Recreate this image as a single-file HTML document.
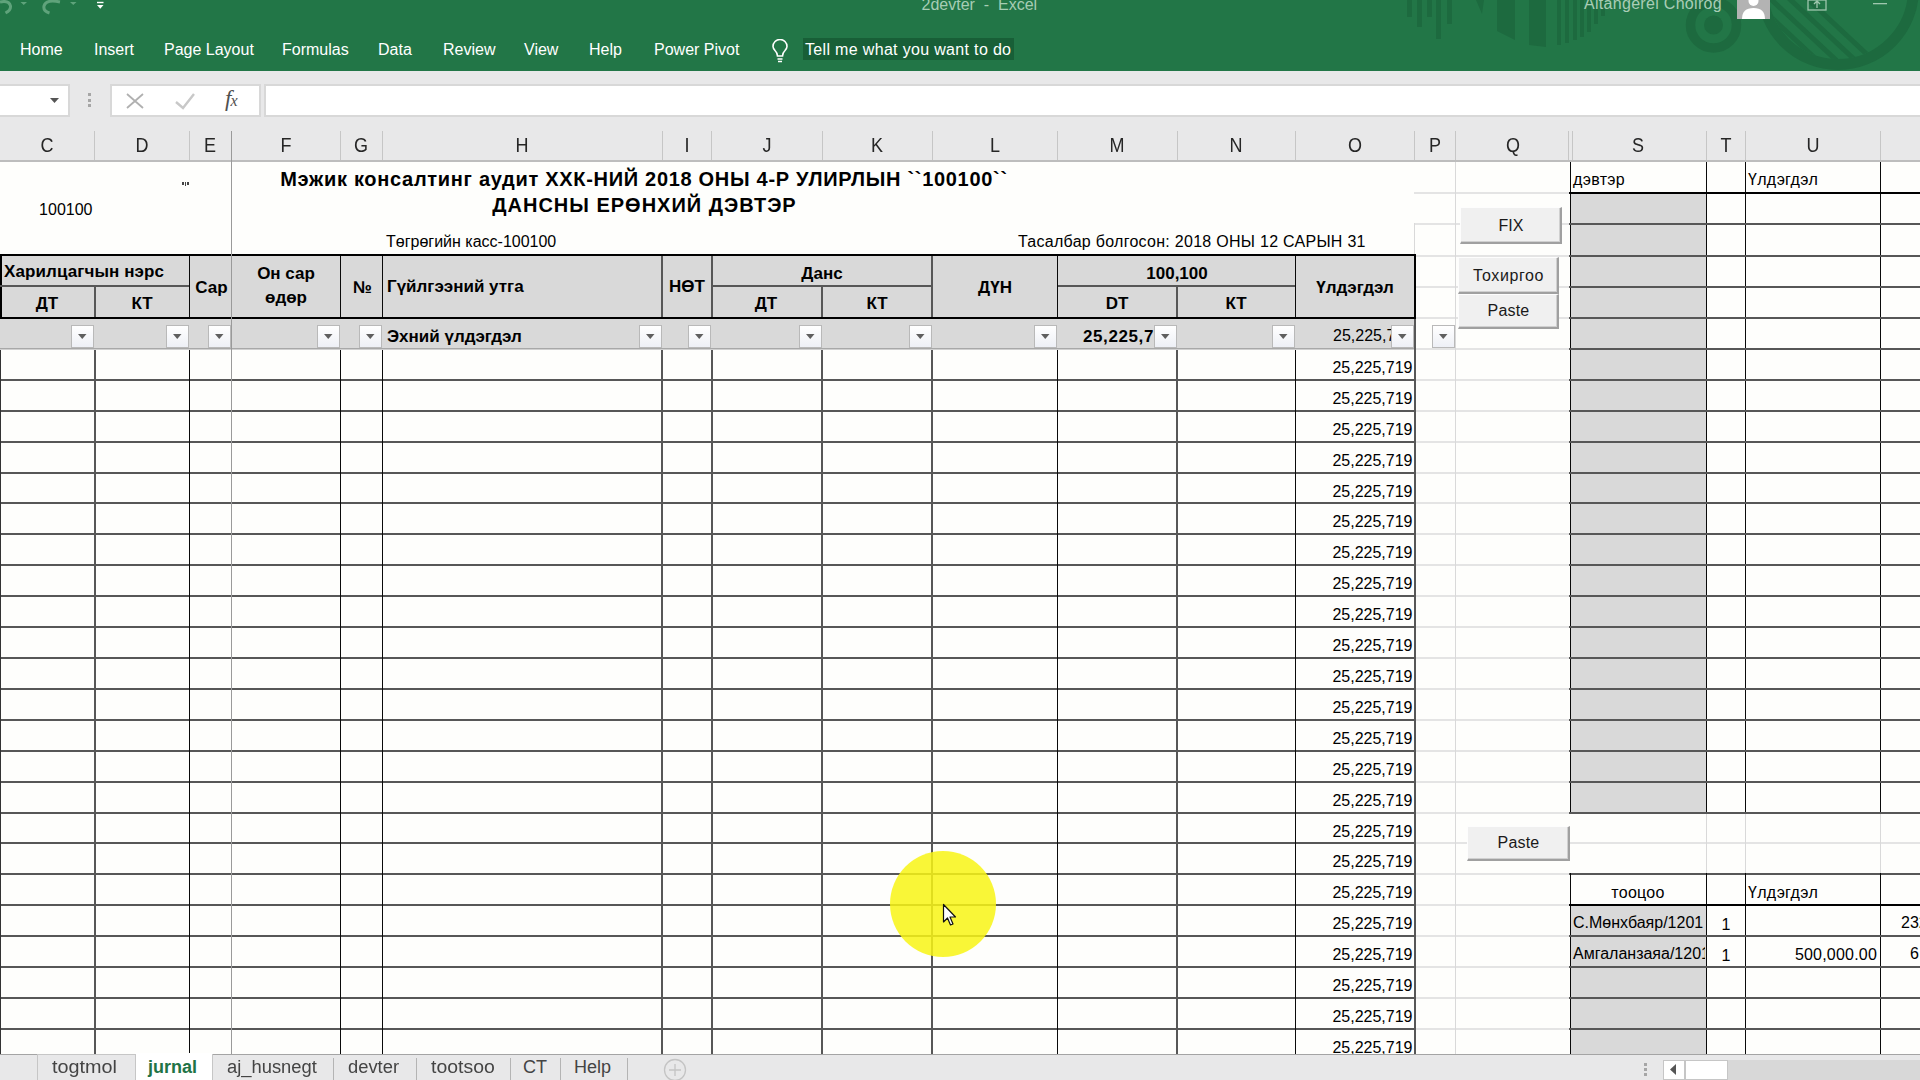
<!DOCTYPE html><html><head><meta charset="utf-8"><style>
html,body{margin:0;padding:0;}body{width:1920px;height:1080px;overflow:hidden;position:relative;background:#fff;font-family:"Liberation Sans",sans-serif;}
div{position:absolute;box-sizing:border-box;}.t{white-space:nowrap;overflow:visible;}
</style></head><body>
<div style="left:0px;top:0px;width:1920px;height:71px;background:#227647"></div>
<div style="left:1407px;top:0px;width:5px;height:17px;background:#1d6a3f"></div>
<div style="left:1417px;top:0px;width:5px;height:27px;background:#1d6a3f"></div>
<div style="left:1427px;top:0px;width:5px;height:17px;background:#1d6a3f"></div>
<div style="left:1436px;top:0px;width:5px;height:39px;background:#1d6a3f"></div>
<div style="left:1447px;top:0px;width:5px;height:24px;background:#1d6a3f"></div>
<div style="left:1557px;top:0px;width:4px;height:45px;background:#1d6a3f"></div>
<div style="left:1565px;top:0px;width:4px;height:43px;background:#1d6a3f"></div>
<div style="left:1573px;top:0px;width:4px;height:40px;background:#1d6a3f"></div>
<div style="left:1580px;top:0px;width:4px;height:37px;background:#1d6a3f"></div>
<div style="left:1587px;top:0px;width:4px;height:32px;background:#1d6a3f"></div>
<div style="left:1594px;top:0px;width:4px;height:24px;background:#1d6a3f"></div>
<div style="left:1601px;top:0px;width:4px;height:16px;background:#1d6a3f"></div>
<svg style="position:absolute;left:0;top:0" width="1920" height="71"><g fill="#1d6a3f"><polygon points="1476,0 1484,0 1482,14"/><polygon points="1497,0 1515,0 1515,40 1497,31"/><polygon points="1529,0 1546,0 1546,47 1529,45"/></g><defs><clipPath id="ci"><circle cx="1838" cy="-11" r="70"/></clipPath></defs><g fill="none" stroke="#1d6a3f"><circle cx="1713.5" cy="25" r="23" stroke-width="9.5"/><circle cx="1713.5" cy="25" r="9.5" fill="#1d6a3f" stroke="none"/><circle cx="1838" cy="-11" r="75.5" stroke-width="11"/><path clip-path="url(#ci)" d="M1742 -10 L1832 74 M1761 -10 L1851 74 M1780 -10 L1870 74 M1798 -10 L1888 74" stroke-width="5"/></g></svg>
<svg style="position:absolute;left:0;top:0" width="120" height="16"><g fill="none" stroke="#5fa37b" stroke-width="3"><path d="M0 2 Q9 0 10.5 6 Q11 10 5.5 13"/><path d="M60 2 Q46 -1 44 6 Q43 11 49.5 13"/></g><g fill="#5fa37b"><polygon points="20.5,2 27,2 23.75,5"/><polygon points="70,2 76.5,2 73.25,5"/></g><g fill="#ffffff"><rect x="97" y="1.8" width="6.5" height="1.4"/><polygon points="97,5 103.5,5 100.25,8.7"/></g></svg>
<div class="t" style="left:921.50px;top:-3.24px;width:1000px;font-size:16px;line-height:16px;color:#a6cdb4;text-align:left;">2devter&nbsp; - &nbsp;Excel</div>
<div class="t" style="left:1584.00px;top:-3.54px;width:1000px;font-size:16px;line-height:16px;color:#a9cdb6;text-align:left;letter-spacing:0.3px;">Altangerel Choirog</div>
<div style="left:1737px;top:0px;width:33px;height:19px;background:#b3b3b3"></div>
<svg style="position:absolute;left:1737px;top:0" width="33" height="19"><g fill="#fff"><circle cx="16.5" cy="1" r="5"/><path d="M5 19 Q5 8 16.5 8 Q28 8 28 19 Z"/></g></svg>
<svg style="position:absolute;left:1800px;top:0" width="100" height="14"><g fill="none" stroke="#9fc7ae" stroke-width="1.3"><rect x="8" y="0" width="18" height="10"/><path d="M17 8 V1 M14 4 L17 1 L20 4"/></g><rect x="73" y="3" width="14" height="1.3" fill="#9fc7ae"/></svg>
<div class="t" style="left:20.00px;top:41.96px;width:1000px;font-size:16px;line-height:16px;color:#ffffff;text-align:left;">Home</div>
<div class="t" style="left:94.00px;top:41.96px;width:1000px;font-size:16px;line-height:16px;color:#ffffff;text-align:left;">Insert</div>
<div class="t" style="left:164.00px;top:41.96px;width:1000px;font-size:16px;line-height:16px;color:#ffffff;text-align:left;">Page Layout</div>
<div class="t" style="left:282.00px;top:41.96px;width:1000px;font-size:16px;line-height:16px;color:#ffffff;text-align:left;">Formulas</div>
<div class="t" style="left:378.00px;top:41.96px;width:1000px;font-size:16px;line-height:16px;color:#ffffff;text-align:left;">Data</div>
<div class="t" style="left:443.00px;top:41.96px;width:1000px;font-size:16px;line-height:16px;color:#ffffff;text-align:left;">Review</div>
<div class="t" style="left:524.00px;top:41.96px;width:1000px;font-size:16px;line-height:16px;color:#ffffff;text-align:left;">View</div>
<div class="t" style="left:589.00px;top:41.96px;width:1000px;font-size:16px;line-height:16px;color:#ffffff;text-align:left;">Help</div>
<div class="t" style="left:654.00px;top:41.96px;width:1000px;font-size:16px;line-height:16px;color:#ffffff;text-align:left;">Power Pivot</div>
<svg style="position:absolute;left:770px;top:38.5px" width="22" height="26"><g fill="none" stroke="#fff" stroke-width="1.6"><path d="M7.5 17 Q7.5 14 5 11.5 Q3 9 3 7.5 A7 7 0 0 1 17 7.5 Q17 9 15 11.5 Q12.5 14 12.5 17 Z"/><path d="M7.5 20 H12.5 M8 22.5 H12"/></g></svg>
<div style="left:803px;top:38px;width:211px;height:22px;background:#185f37"></div>
<div class="t" style="left:805.00px;top:41.96px;width:1000px;font-size:16px;line-height:16px;color:#ffffff;text-align:left;letter-spacing:0.33px;">Tell me what you want to do</div>
<div style="left:0px;top:71px;width:1920px;height:90px;background:#e8e8e9"></div>
<div style="left:0px;top:84px;width:70px;height:33px;background:#fff;border:2px solid #d8d8d8;border-left:none"></div>
<svg style="position:absolute;left:50px;top:98px" width="10" height="6"><polygon points="0,0 9,0 4.5,5" fill="#555"/></svg>
<div style="left:88px;top:93px;width:3px;height:3px;background:#a6a6a6"></div>
<div style="left:88px;top:99px;width:3px;height:3px;background:#a6a6a6"></div>
<div style="left:88px;top:104px;width:3px;height:3px;background:#a6a6a6"></div>
<div style="left:110px;top:84px;width:151px;height:33px;background:#fff;border:2px solid #d8d8d8"></div>
<svg style="position:absolute;left:110px;top:85px" width="150" height="32"><g fill="none" stroke-width="1.8"><path d="M17 9 L33 23 M33 9 L17 23" stroke="#b0b0b0"/><path d="M66 17 L73 23 L84 9" stroke="#c8c8c8" stroke-width="2.4"/></g></svg>
<div class="t" style="left:225.00px;top:86.53px;width:1000px;font-size:23px;line-height:23px;color:#505050;text-align:left;font-family:'Liberation Serif',serif;"><i>f</i><i style='font-size:16px;margin-left:-1px'>x</i></div>
<div style="left:264px;top:84px;width:1656px;height:33px;background:#fff;border:2px solid #d8d8d8;border-right:none"></div>
<div class="t" style="left:-453.00px;top:135.37px;width:1000px;font-size:20px;line-height:20px;color:#262626;text-align:center;transform:scaleX(0.9);transform-origin:center center;">C</div>
<div class="t" style="left:-358.50px;top:135.37px;width:1000px;font-size:20px;line-height:20px;color:#262626;text-align:center;transform:scaleX(0.9);transform-origin:center center;">D</div>
<div class="t" style="left:-290.00px;top:135.37px;width:1000px;font-size:20px;line-height:20px;color:#262626;text-align:center;transform:scaleX(0.9);transform-origin:center center;">E</div>
<div class="t" style="left:-214.50px;top:135.37px;width:1000px;font-size:20px;line-height:20px;color:#262626;text-align:center;transform:scaleX(0.9);transform-origin:center center;">F</div>
<div class="t" style="left:-139.00px;top:135.37px;width:1000px;font-size:20px;line-height:20px;color:#262626;text-align:center;transform:scaleX(0.9);transform-origin:center center;">G</div>
<div class="t" style="left:22.00px;top:135.37px;width:1000px;font-size:20px;line-height:20px;color:#262626;text-align:center;transform:scaleX(0.9);transform-origin:center center;">H</div>
<div class="t" style="left:186.50px;top:135.37px;width:1000px;font-size:20px;line-height:20px;color:#262626;text-align:center;transform:scaleX(0.9);transform-origin:center center;">I</div>
<div class="t" style="left:266.50px;top:135.37px;width:1000px;font-size:20px;line-height:20px;color:#262626;text-align:center;transform:scaleX(0.9);transform-origin:center center;">J</div>
<div class="t" style="left:377.00px;top:135.37px;width:1000px;font-size:20px;line-height:20px;color:#262626;text-align:center;transform:scaleX(0.9);transform-origin:center center;">K</div>
<div class="t" style="left:494.50px;top:135.37px;width:1000px;font-size:20px;line-height:20px;color:#262626;text-align:center;transform:scaleX(0.9);transform-origin:center center;">L</div>
<div class="t" style="left:617.00px;top:135.37px;width:1000px;font-size:20px;line-height:20px;color:#262626;text-align:center;transform:scaleX(0.9);transform-origin:center center;">M</div>
<div class="t" style="left:736.00px;top:135.37px;width:1000px;font-size:20px;line-height:20px;color:#262626;text-align:center;transform:scaleX(0.9);transform-origin:center center;">N</div>
<div class="t" style="left:854.50px;top:135.37px;width:1000px;font-size:20px;line-height:20px;color:#262626;text-align:center;transform:scaleX(0.9);transform-origin:center center;">O</div>
<div class="t" style="left:934.50px;top:135.37px;width:1000px;font-size:20px;line-height:20px;color:#262626;text-align:center;transform:scaleX(0.9);transform-origin:center center;">P</div>
<div class="t" style="left:1012.50px;top:135.37px;width:1000px;font-size:20px;line-height:20px;color:#262626;text-align:center;transform:scaleX(0.9);transform-origin:center center;">Q</div>
<div class="t" style="left:1138.00px;top:135.37px;width:1000px;font-size:20px;line-height:20px;color:#262626;text-align:center;transform:scaleX(0.9);transform-origin:center center;">S</div>
<div class="t" style="left:1225.50px;top:135.37px;width:1000px;font-size:20px;line-height:20px;color:#262626;text-align:center;transform:scaleX(0.9);transform-origin:center center;">T</div>
<div class="t" style="left:1312.50px;top:135.37px;width:1000px;font-size:20px;line-height:20px;color:#262626;text-align:center;transform:scaleX(0.9);transform-origin:center center;">U</div>
<div style="left:94px;top:131px;width:1px;height:30px;background:#c6c6c6"></div>
<div style="left:189px;top:131px;width:1px;height:30px;background:#c6c6c6"></div>
<div style="left:340px;top:131px;width:1px;height:30px;background:#c6c6c6"></div>
<div style="left:382px;top:131px;width:1px;height:30px;background:#c6c6c6"></div>
<div style="left:662px;top:131px;width:1px;height:30px;background:#c6c6c6"></div>
<div style="left:711px;top:131px;width:1px;height:30px;background:#c6c6c6"></div>
<div style="left:822px;top:131px;width:1px;height:30px;background:#c6c6c6"></div>
<div style="left:932px;top:131px;width:1px;height:30px;background:#c6c6c6"></div>
<div style="left:1057px;top:131px;width:1px;height:30px;background:#c6c6c6"></div>
<div style="left:1177px;top:131px;width:1px;height:30px;background:#c6c6c6"></div>
<div style="left:1295px;top:131px;width:1px;height:30px;background:#c6c6c6"></div>
<div style="left:1414px;top:131px;width:1px;height:30px;background:#c6c6c6"></div>
<div style="left:1455px;top:131px;width:1px;height:30px;background:#c6c6c6"></div>
<div style="left:1568px;top:131px;width:1px;height:30px;background:#c6c6c6"></div>
<div style="left:1572px;top:131px;width:1px;height:30px;background:#c6c6c6"></div>
<div style="left:1706px;top:131px;width:1px;height:30px;background:#c6c6c6"></div>
<div style="left:1745px;top:131px;width:1px;height:30px;background:#c6c6c6"></div>
<div style="left:1880px;top:131px;width:1px;height:30px;background:#c6c6c6"></div>
<div style="left:0px;top:160px;width:1920px;height:2px;background:#bdbdbd"></div>
<div style="left:0px;top:162px;width:1920px;height:892px;background:#fefefc"></div>
<div style="left:1414px;top:192px;width:156px;height:2px;background:#e4e4e4"></div>
<div style="left:1414px;top:223px;width:156px;height:2px;background:#e4e4e4"></div>
<div style="left:1414px;top:255px;width:156px;height:2px;background:#e4e4e4"></div>
<div style="left:1414px;top:286px;width:156px;height:2px;background:#e4e4e4"></div>
<div style="left:1414px;top:317px;width:156px;height:2px;background:#e4e4e4"></div>
<div style="left:1414px;top:348px;width:156px;height:2px;background:#e4e4e4"></div>
<div style="left:1414px;top:379px;width:156px;height:2px;background:#e4e4e4"></div>
<div style="left:1414px;top:410px;width:156px;height:2px;background:#e4e4e4"></div>
<div style="left:1414px;top:441px;width:156px;height:2px;background:#e4e4e4"></div>
<div style="left:1414px;top:472px;width:156px;height:2px;background:#e4e4e4"></div>
<div style="left:1414px;top:502px;width:156px;height:2px;background:#e4e4e4"></div>
<div style="left:1414px;top:533px;width:156px;height:2px;background:#e4e4e4"></div>
<div style="left:1414px;top:564px;width:156px;height:2px;background:#e4e4e4"></div>
<div style="left:1414px;top:595px;width:156px;height:2px;background:#e4e4e4"></div>
<div style="left:1414px;top:626px;width:156px;height:2px;background:#e4e4e4"></div>
<div style="left:1414px;top:657px;width:156px;height:2px;background:#e4e4e4"></div>
<div style="left:1414px;top:688px;width:156px;height:2px;background:#e4e4e4"></div>
<div style="left:1414px;top:719px;width:156px;height:2px;background:#e4e4e4"></div>
<div style="left:1414px;top:750px;width:156px;height:2px;background:#e4e4e4"></div>
<div style="left:1414px;top:781px;width:156px;height:2px;background:#e4e4e4"></div>
<div style="left:1414px;top:812px;width:156px;height:2px;background:#e4e4e4"></div>
<div style="left:1414px;top:842px;width:156px;height:2px;background:#e4e4e4"></div>
<div style="left:1414px;top:873px;width:156px;height:2px;background:#e4e4e4"></div>
<div style="left:1414px;top:904px;width:156px;height:2px;background:#e4e4e4"></div>
<div style="left:1414px;top:935px;width:156px;height:2px;background:#e4e4e4"></div>
<div style="left:1414px;top:966px;width:156px;height:2px;background:#e4e4e4"></div>
<div style="left:1414px;top:997px;width:156px;height:2px;background:#e4e4e4"></div>
<div style="left:1414px;top:1028px;width:156px;height:2px;background:#e4e4e4"></div>
<div style="left:1455px;top:162px;width:1px;height:892px;background:#d9d9d9"></div>
<div style="left:1414px;top:223px;width:1px;height:32px;background:#d9d9d9"></div>
<div style="left:1570px;top:842px;width:350px;height:2px;background:#e4e4e4"></div>
<div style="left:1706px;top:812px;width:1px;height:62px;background:#d9d9d9"></div>
<div style="left:1745px;top:812px;width:1px;height:62px;background:#d9d9d9"></div>
<div style="left:1880px;top:812px;width:1px;height:62px;background:#d9d9d9"></div>
<div style="left:0px;top:255px;width:1415px;height:94px;background:#d9d9d9"></div>
<div style="left:0px;top:254px;width:1416px;height:2px;background:#000"></div>
<div style="left:0px;top:317px;width:1416px;height:2px;background:#000"></div>
<div style="left:0px;top:254px;width:2px;height:65px;background:#000"></div>
<div style="left:1414px;top:254px;width:2px;height:65px;background:#000"></div>
<div style="left:0px;top:285px;width:189px;height:2px;background:#575757"></div>
<div style="left:711px;top:285px;width:221px;height:2px;background:#575757"></div>
<div style="left:1057px;top:285px;width:238px;height:2px;background:#575757"></div>
<div style="left:189px;top:256px;width:1px;height:61px;background:#0a0a0a"></div>
<div style="left:340px;top:256px;width:1px;height:61px;background:#0a0a0a"></div>
<div style="left:382px;top:256px;width:1px;height:61px;background:#0a0a0a"></div>
<div style="left:661px;top:256px;width:2px;height:61px;background:#575757"></div>
<div style="left:711px;top:256px;width:2px;height:61px;background:#575757"></div>
<div style="left:931px;top:256px;width:2px;height:61px;background:#575757"></div>
<div style="left:1057px;top:256px;width:1px;height:61px;background:#0a0a0a"></div>
<div style="left:1295px;top:256px;width:1px;height:61px;background:#0a0a0a"></div>
<div style="left:94px;top:287px;width:2px;height:30px;background:#575757"></div>
<div style="left:821px;top:287px;width:2px;height:30px;background:#575757"></div>
<div style="left:1176px;top:287px;width:2px;height:30px;background:#575757"></div>
<div style="left:0px;top:348px;width:1416px;height:1px;background:#a8a8a8"></div>
<div style="left:0px;top:349px;width:1416px;height:1px;background:#d0d0d0"></div>
<div style="left:0px;top:379px;width:1416px;height:2px;background:#575757"></div>
<div style="left:0px;top:410px;width:1416px;height:2px;background:#575757"></div>
<div style="left:0px;top:441px;width:1416px;height:2px;background:#575757"></div>
<div style="left:0px;top:472px;width:1416px;height:2px;background:#575757"></div>
<div style="left:0px;top:502px;width:1416px;height:2px;background:#575757"></div>
<div style="left:0px;top:533px;width:1416px;height:2px;background:#575757"></div>
<div style="left:0px;top:564px;width:1416px;height:2px;background:#575757"></div>
<div style="left:0px;top:595px;width:1416px;height:2px;background:#575757"></div>
<div style="left:0px;top:626px;width:1416px;height:2px;background:#575757"></div>
<div style="left:0px;top:657px;width:1416px;height:2px;background:#575757"></div>
<div style="left:0px;top:688px;width:1416px;height:2px;background:#575757"></div>
<div style="left:0px;top:719px;width:1416px;height:2px;background:#575757"></div>
<div style="left:0px;top:750px;width:1416px;height:2px;background:#575757"></div>
<div style="left:0px;top:781px;width:1416px;height:2px;background:#575757"></div>
<div style="left:0px;top:812px;width:1416px;height:2px;background:#575757"></div>
<div style="left:0px;top:842px;width:1416px;height:2px;background:#575757"></div>
<div style="left:0px;top:873px;width:1416px;height:2px;background:#575757"></div>
<div style="left:0px;top:904px;width:1416px;height:2px;background:#575757"></div>
<div style="left:0px;top:935px;width:1416px;height:2px;background:#575757"></div>
<div style="left:0px;top:966px;width:1416px;height:2px;background:#575757"></div>
<div style="left:0px;top:997px;width:1416px;height:2px;background:#575757"></div>
<div style="left:0px;top:1028px;width:1416px;height:2px;background:#575757"></div>
<div style="left:94px;top:350px;width:2px;height:704px;background:#575757"></div>
<div style="left:189px;top:350px;width:1px;height:704px;background:#0a0a0a"></div>
<div style="left:340px;top:350px;width:1px;height:704px;background:#0a0a0a"></div>
<div style="left:382px;top:350px;width:1px;height:704px;background:#0a0a0a"></div>
<div style="left:661px;top:350px;width:2px;height:704px;background:#575757"></div>
<div style="left:711px;top:350px;width:2px;height:704px;background:#575757"></div>
<div style="left:821px;top:350px;width:2px;height:704px;background:#575757"></div>
<div style="left:931px;top:350px;width:2px;height:704px;background:#575757"></div>
<div style="left:1057px;top:350px;width:1px;height:704px;background:#0a0a0a"></div>
<div style="left:1176px;top:350px;width:2px;height:704px;background:#575757"></div>
<div style="left:1295px;top:350px;width:1px;height:704px;background:#0a0a0a"></div>
<div style="left:1414px;top:319px;width:2px;height:735px;background:#575757"></div>
<div style="left:0px;top:350px;width:1px;height:704px;background:#333"></div>
<div style="left:231px;top:131px;width:1px;height:923px;background:#9a9a9a"></div>
<div class="t" style="left:4.00px;top:262.61px;width:1000px;font-size:17px;line-height:17px;color:#000;text-align:left;font-weight:700;letter-spacing:0.1px;">Харилцагчын нэрс</div>
<div class="t" style="left:-453.00px;top:294.61px;width:1000px;font-size:17px;line-height:17px;color:#000;text-align:center;font-weight:700;">ДТ</div>
<div class="t" style="left:-358.00px;top:294.61px;width:1000px;font-size:17px;line-height:17px;color:#000;text-align:center;font-weight:700;">КТ</div>
<div class="t" style="left:-288.50px;top:278.61px;width:1000px;font-size:17px;line-height:17px;color:#000;text-align:center;font-weight:700;">Сар</div>
<div class="t" style="left:-214.00px;top:264.61px;width:1000px;font-size:17px;line-height:17px;color:#000;text-align:center;font-weight:700;">Он сар</div>
<div class="t" style="left:-214.00px;top:288.61px;width:1000px;font-size:17px;line-height:17px;color:#000;text-align:center;font-weight:700;">өдөр</div>
<div class="t" style="left:-137.50px;top:278.61px;width:1000px;font-size:17px;line-height:17px;color:#000;text-align:center;font-weight:700;">№</div>
<div class="t" style="left:387.00px;top:278.11px;width:1000px;font-size:17px;line-height:17px;color:#000;text-align:left;font-weight:700;">Гүйлгээний утга</div>
<div class="t" style="left:187.00px;top:278.11px;width:1000px;font-size:17px;line-height:17px;color:#000;text-align:center;font-weight:700;">НӨТ</div>
<div class="t" style="left:322.00px;top:264.61px;width:1000px;font-size:17px;line-height:17px;color:#000;text-align:center;font-weight:700;">Данс</div>
<div class="t" style="left:266.00px;top:294.61px;width:1000px;font-size:17px;line-height:17px;color:#000;text-align:center;font-weight:700;">ДТ</div>
<div class="t" style="left:377.00px;top:294.61px;width:1000px;font-size:17px;line-height:17px;color:#000;text-align:center;font-weight:700;">КТ</div>
<div class="t" style="left:495.00px;top:278.61px;width:1000px;font-size:17px;line-height:17px;color:#000;text-align:center;font-weight:700;">ДҮН</div>
<div class="t" style="left:677.00px;top:264.61px;width:1000px;font-size:17px;line-height:17px;color:#000;text-align:center;font-weight:700;">100,100</div>
<div class="t" style="left:617.00px;top:294.61px;width:1000px;font-size:17px;line-height:17px;color:#000;text-align:center;font-weight:700;">DT</div>
<div class="t" style="left:736.00px;top:294.61px;width:1000px;font-size:17px;line-height:17px;color:#000;text-align:center;font-weight:700;">КТ</div>
<div class="t" style="left:855.00px;top:278.61px;width:1000px;font-size:17px;line-height:17px;color:#000;text-align:center;font-weight:700;">Үлдэгдэл</div>
<div class="t" style="left:387.00px;top:327.61px;width:1000px;font-size:17px;line-height:17px;color:#000;text-align:left;font-weight:700;">Эхний үлдэгдэл</div>
<div style="left:1060px;top:320px;width:94px;height:28px;overflow:hidden">
<div class="t" style="left:23.00px;top:7.61px;width:1000px;font-size:17px;line-height:17px;color:#000;text-align:left;font-weight:700;letter-spacing:0.6px;">25,225,719</div>
</div>
<div style="left:1300px;top:320px;width:91px;height:28px;overflow:hidden">
<div class="t" style="left:33.00px;top:8.46px;width:1000px;font-size:16px;line-height:16px;color:#000;text-align:left;">25,225,719</div>
</div>
<div style="left:71px;top:325px;width:23px;height:23px;border:1px solid #b9b9b9;background:linear-gradient(#ffffff,#eef0f6)"></div>
<svg style="position:absolute;left:78px;top:334px" width="9" height="6"><polygon points="0,0 8.5,0 4.25,5" fill="#5f5f5f"/></svg>
<div style="left:166px;top:325px;width:23px;height:23px;border:1px solid #b9b9b9;background:linear-gradient(#ffffff,#eef0f6)"></div>
<svg style="position:absolute;left:173px;top:334px" width="9" height="6"><polygon points="0,0 8.5,0 4.25,5" fill="#5f5f5f"/></svg>
<div style="left:208px;top:325px;width:23px;height:23px;border:1px solid #b9b9b9;background:linear-gradient(#ffffff,#eef0f6)"></div>
<svg style="position:absolute;left:215px;top:334px" width="9" height="6"><polygon points="0,0 8.5,0 4.25,5" fill="#5f5f5f"/></svg>
<div style="left:317px;top:325px;width:23px;height:23px;border:1px solid #b9b9b9;background:linear-gradient(#ffffff,#eef0f6)"></div>
<svg style="position:absolute;left:324px;top:334px" width="9" height="6"><polygon points="0,0 8.5,0 4.25,5" fill="#5f5f5f"/></svg>
<div style="left:359px;top:325px;width:23px;height:23px;border:1px solid #b9b9b9;background:linear-gradient(#ffffff,#eef0f6)"></div>
<svg style="position:absolute;left:366px;top:334px" width="9" height="6"><polygon points="0,0 8.5,0 4.25,5" fill="#5f5f5f"/></svg>
<div style="left:639px;top:325px;width:23px;height:23px;border:1px solid #b9b9b9;background:linear-gradient(#ffffff,#eef0f6)"></div>
<svg style="position:absolute;left:646px;top:334px" width="9" height="6"><polygon points="0,0 8.5,0 4.25,5" fill="#5f5f5f"/></svg>
<div style="left:688px;top:325px;width:23px;height:23px;border:1px solid #b9b9b9;background:linear-gradient(#ffffff,#eef0f6)"></div>
<svg style="position:absolute;left:695px;top:334px" width="9" height="6"><polygon points="0,0 8.5,0 4.25,5" fill="#5f5f5f"/></svg>
<div style="left:799px;top:325px;width:23px;height:23px;border:1px solid #b9b9b9;background:linear-gradient(#ffffff,#eef0f6)"></div>
<svg style="position:absolute;left:806px;top:334px" width="9" height="6"><polygon points="0,0 8.5,0 4.25,5" fill="#5f5f5f"/></svg>
<div style="left:909px;top:325px;width:23px;height:23px;border:1px solid #b9b9b9;background:linear-gradient(#ffffff,#eef0f6)"></div>
<svg style="position:absolute;left:916px;top:334px" width="9" height="6"><polygon points="0,0 8.5,0 4.25,5" fill="#5f5f5f"/></svg>
<div style="left:1034px;top:325px;width:23px;height:23px;border:1px solid #b9b9b9;background:linear-gradient(#ffffff,#eef0f6)"></div>
<svg style="position:absolute;left:1041px;top:334px" width="9" height="6"><polygon points="0,0 8.5,0 4.25,5" fill="#5f5f5f"/></svg>
<div style="left:1154px;top:325px;width:23px;height:23px;border:1px solid #b9b9b9;background:linear-gradient(#ffffff,#eef0f6)"></div>
<svg style="position:absolute;left:1161px;top:334px" width="9" height="6"><polygon points="0,0 8.5,0 4.25,5" fill="#5f5f5f"/></svg>
<div style="left:1272px;top:325px;width:23px;height:23px;border:1px solid #b9b9b9;background:linear-gradient(#ffffff,#eef0f6)"></div>
<svg style="position:absolute;left:1279px;top:334px" width="9" height="6"><polygon points="0,0 8.5,0 4.25,5" fill="#5f5f5f"/></svg>
<div style="left:1391px;top:325px;width:23px;height:23px;border:1px solid #b9b9b9;background:linear-gradient(#ffffff,#eef0f6)"></div>
<svg style="position:absolute;left:1398px;top:334px" width="9" height="6"><polygon points="0,0 8.5,0 4.25,5" fill="#5f5f5f"/></svg>
<div style="left:1432px;top:325px;width:23px;height:23px;border:1px solid #b9b9b9;background:linear-gradient(#ffffff,#eef0f6)"></div>
<svg style="position:absolute;left:1439px;top:334px" width="9" height="6"><polygon points="0,0 8.5,0 4.25,5" fill="#5f5f5f"/></svg>
<div style="left:1296px;top:350px;width:117px;height:30px;overflow:hidden">
<div class="t" style="left:-883.50px;top:10.46px;width:1000px;font-size:16px;line-height:16px;color:#000;text-align:right;">25,225,719</div>
</div>
<div style="left:1296px;top:381px;width:117px;height:30px;overflow:hidden">
<div class="t" style="left:-883.50px;top:10.46px;width:1000px;font-size:16px;line-height:16px;color:#000;text-align:right;">25,225,719</div>
</div>
<div style="left:1296px;top:412px;width:117px;height:30px;overflow:hidden">
<div class="t" style="left:-883.50px;top:10.46px;width:1000px;font-size:16px;line-height:16px;color:#000;text-align:right;">25,225,719</div>
</div>
<div style="left:1296px;top:443px;width:117px;height:30px;overflow:hidden">
<div class="t" style="left:-883.50px;top:10.46px;width:1000px;font-size:16px;line-height:16px;color:#000;text-align:right;">25,225,719</div>
</div>
<div style="left:1296px;top:474px;width:117px;height:30px;overflow:hidden">
<div class="t" style="left:-883.50px;top:10.46px;width:1000px;font-size:16px;line-height:16px;color:#000;text-align:right;">25,225,719</div>
</div>
<div style="left:1296px;top:504px;width:117px;height:30px;overflow:hidden">
<div class="t" style="left:-883.50px;top:10.46px;width:1000px;font-size:16px;line-height:16px;color:#000;text-align:right;">25,225,719</div>
</div>
<div style="left:1296px;top:535px;width:117px;height:30px;overflow:hidden">
<div class="t" style="left:-883.50px;top:10.46px;width:1000px;font-size:16px;line-height:16px;color:#000;text-align:right;">25,225,719</div>
</div>
<div style="left:1296px;top:566px;width:117px;height:30px;overflow:hidden">
<div class="t" style="left:-883.50px;top:10.46px;width:1000px;font-size:16px;line-height:16px;color:#000;text-align:right;">25,225,719</div>
</div>
<div style="left:1296px;top:597px;width:117px;height:30px;overflow:hidden">
<div class="t" style="left:-883.50px;top:10.46px;width:1000px;font-size:16px;line-height:16px;color:#000;text-align:right;">25,225,719</div>
</div>
<div style="left:1296px;top:628px;width:117px;height:30px;overflow:hidden">
<div class="t" style="left:-883.50px;top:10.46px;width:1000px;font-size:16px;line-height:16px;color:#000;text-align:right;">25,225,719</div>
</div>
<div style="left:1296px;top:659px;width:117px;height:30px;overflow:hidden">
<div class="t" style="left:-883.50px;top:10.46px;width:1000px;font-size:16px;line-height:16px;color:#000;text-align:right;">25,225,719</div>
</div>
<div style="left:1296px;top:690px;width:117px;height:30px;overflow:hidden">
<div class="t" style="left:-883.50px;top:10.46px;width:1000px;font-size:16px;line-height:16px;color:#000;text-align:right;">25,225,719</div>
</div>
<div style="left:1296px;top:721px;width:117px;height:30px;overflow:hidden">
<div class="t" style="left:-883.50px;top:10.46px;width:1000px;font-size:16px;line-height:16px;color:#000;text-align:right;">25,225,719</div>
</div>
<div style="left:1296px;top:752px;width:117px;height:30px;overflow:hidden">
<div class="t" style="left:-883.50px;top:10.46px;width:1000px;font-size:16px;line-height:16px;color:#000;text-align:right;">25,225,719</div>
</div>
<div style="left:1296px;top:783px;width:117px;height:30px;overflow:hidden">
<div class="t" style="left:-883.50px;top:10.46px;width:1000px;font-size:16px;line-height:16px;color:#000;text-align:right;">25,225,719</div>
</div>
<div style="left:1296px;top:814px;width:117px;height:30px;overflow:hidden">
<div class="t" style="left:-883.50px;top:10.46px;width:1000px;font-size:16px;line-height:16px;color:#000;text-align:right;">25,225,719</div>
</div>
<div style="left:1296px;top:844px;width:117px;height:30px;overflow:hidden">
<div class="t" style="left:-883.50px;top:10.46px;width:1000px;font-size:16px;line-height:16px;color:#000;text-align:right;">25,225,719</div>
</div>
<div style="left:1296px;top:875px;width:117px;height:30px;overflow:hidden">
<div class="t" style="left:-883.50px;top:10.46px;width:1000px;font-size:16px;line-height:16px;color:#000;text-align:right;">25,225,719</div>
</div>
<div style="left:1296px;top:906px;width:117px;height:30px;overflow:hidden">
<div class="t" style="left:-883.50px;top:10.46px;width:1000px;font-size:16px;line-height:16px;color:#000;text-align:right;">25,225,719</div>
</div>
<div style="left:1296px;top:937px;width:117px;height:30px;overflow:hidden">
<div class="t" style="left:-883.50px;top:10.46px;width:1000px;font-size:16px;line-height:16px;color:#000;text-align:right;">25,225,719</div>
</div>
<div style="left:1296px;top:968px;width:117px;height:30px;overflow:hidden">
<div class="t" style="left:-883.50px;top:10.46px;width:1000px;font-size:16px;line-height:16px;color:#000;text-align:right;">25,225,719</div>
</div>
<div style="left:1296px;top:999px;width:117px;height:30px;overflow:hidden">
<div class="t" style="left:-883.50px;top:10.46px;width:1000px;font-size:16px;line-height:16px;color:#000;text-align:right;">25,225,719</div>
</div>
<div style="left:1296px;top:1030px;width:117px;height:24px;overflow:hidden">
<div class="t" style="left:-883.50px;top:10.46px;width:1000px;font-size:16px;line-height:16px;color:#000;text-align:right;">25,225,719</div>
</div>
<div style="left:182px;top:182px;width:1.5px;height:3px;background:#444"></div>
<div style="left:184.5px;top:182px;width:1.5px;height:4px;background:#444"></div>
<div style="left:187px;top:182px;width:1.5px;height:3px;background:#444"></div>
<div class="t" style="left:-907.50px;top:201.76px;width:1000px;font-size:16px;line-height:16px;color:#000;text-align:right;">100100</div>
<div class="t" style="left:144.00px;top:169.07px;width:1000px;font-size:20px;line-height:20px;color:#000;text-align:center;font-weight:700;letter-spacing:0.7px;">Мэжик консалтинг аудит ХХК-НИЙ 2018 ОНЫ 4-Р УЛИРЛЫН ``100100``</div>
<div class="t" style="left:144.50px;top:195.07px;width:1000px;font-size:20px;line-height:20px;color:#000;text-align:center;font-weight:700;letter-spacing:1.0px;">ДАНСНЫ ЕРӨНХИЙ ДЭВТЭР</div>
<div class="t" style="left:386.00px;top:233.96px;width:1000px;font-size:16px;line-height:16px;color:#000;text-align:left;">Төгрөгийн касс-100100</div>
<div class="t" style="left:1018.00px;top:233.96px;width:1000px;font-size:16px;line-height:16px;color:#000;text-align:left;letter-spacing:0.28px;">Тасалбар болгосон: 2018 ОНЫ 12 САРЫН 31</div>
<div style="left:1570px;top:162px;width:1px;height:651px;background:#0a0a0a"></div>
<div style="left:1706px;top:162px;width:1px;height:651px;background:#0a0a0a"></div>
<div style="left:1745px;top:162px;width:1px;height:651px;background:#0a0a0a"></div>
<div style="left:1880px;top:162px;width:1px;height:651px;background:#0a0a0a"></div>
<div style="left:1571px;top:194px;width:135px;height:618px;background:#d9d9d9"></div>
<div style="left:1569px;top:192px;width:351px;height:2px;background:#000"></div>
<div style="left:1569px;top:223px;width:351px;height:2px;background:#575757"></div>
<div style="left:1569px;top:255px;width:351px;height:2px;background:#575757"></div>
<div style="left:1569px;top:286px;width:351px;height:2px;background:#575757"></div>
<div style="left:1569px;top:317px;width:351px;height:2px;background:#575757"></div>
<div style="left:1569px;top:348px;width:351px;height:2px;background:#575757"></div>
<div style="left:1569px;top:379px;width:351px;height:2px;background:#575757"></div>
<div style="left:1569px;top:410px;width:351px;height:2px;background:#575757"></div>
<div style="left:1569px;top:441px;width:351px;height:2px;background:#575757"></div>
<div style="left:1569px;top:472px;width:351px;height:2px;background:#575757"></div>
<div style="left:1569px;top:502px;width:351px;height:2px;background:#575757"></div>
<div style="left:1569px;top:533px;width:351px;height:2px;background:#575757"></div>
<div style="left:1569px;top:564px;width:351px;height:2px;background:#575757"></div>
<div style="left:1569px;top:595px;width:351px;height:2px;background:#575757"></div>
<div style="left:1569px;top:626px;width:351px;height:2px;background:#575757"></div>
<div style="left:1569px;top:657px;width:351px;height:2px;background:#575757"></div>
<div style="left:1569px;top:688px;width:351px;height:2px;background:#575757"></div>
<div style="left:1569px;top:719px;width:351px;height:2px;background:#575757"></div>
<div style="left:1569px;top:750px;width:351px;height:2px;background:#575757"></div>
<div style="left:1569px;top:781px;width:351px;height:2px;background:#575757"></div>
<div style="left:1569px;top:812px;width:351px;height:2px;background:#575757"></div>
<div class="t" style="left:1573.00px;top:171.66px;width:1000px;font-size:16px;line-height:16px;color:#000;text-align:left;letter-spacing:0.3px;">дэвтэр</div>
<div class="t" style="left:1748.00px;top:171.66px;width:1000px;font-size:16px;line-height:16px;color:#000;text-align:left;letter-spacing:0.3px;">Үлдэгдэл</div>
<div style="left:1569px;top:873px;width:351px;height:2px;background:#575757"></div>
<div style="left:1570px;top:873px;width:1px;height:181px;background:#0a0a0a"></div>
<div style="left:1706px;top:873px;width:1px;height:181px;background:#0a0a0a"></div>
<div style="left:1745px;top:873px;width:1px;height:181px;background:#0a0a0a"></div>
<div style="left:1880px;top:873px;width:1px;height:181px;background:#0a0a0a"></div>
<div style="left:1571px;top:906px;width:135px;height:148px;background:#d9d9d9"></div>
<div style="left:1569px;top:904px;width:351px;height:2px;background:#000"></div>
<div style="left:1569px;top:935px;width:351px;height:2px;background:#575757"></div>
<div style="left:1569px;top:966px;width:351px;height:2px;background:#575757"></div>
<div style="left:1569px;top:997px;width:351px;height:2px;background:#575757"></div>
<div style="left:1569px;top:1028px;width:351px;height:2px;background:#575757"></div>
<div class="t" style="left:1138.00px;top:884.76px;width:1000px;font-size:16px;line-height:16px;color:#000;text-align:center;letter-spacing:0.3px;">тооцоо</div>
<div class="t" style="left:1748.00px;top:884.76px;width:1000px;font-size:16px;line-height:16px;color:#000;text-align:left;letter-spacing:0.3px;">Үлдэгдэл</div>
<div style="left:1571px;top:906px;width:134px;height:60px;overflow:hidden">
<div class="t" style="left:2.00px;top:9.46px;width:1000px;font-size:16px;line-height:16px;color:#000;text-align:left;">С.Мөнхбаяр/1201</div>
<div class="t" style="left:2.00px;top:40.46px;width:1000px;font-size:16px;line-height:16px;color:#000;text-align:left;">Амгаланзаяа/1201</div>
</div>
<div class="t" style="left:1226.00px;top:917.46px;width:1000px;font-size:16px;line-height:16px;color:#000;text-align:center;">1</div>
<div class="t" style="left:1226.00px;top:948.46px;width:1000px;font-size:16px;line-height:16px;color:#000;text-align:center;">1</div>
<div class="t" style="left:877.00px;top:947.46px;width:1000px;font-size:16px;line-height:16px;color:#000;text-align:right;letter-spacing:0.2px;">500,000.00</div>
<div style="left:1882px;top:906px;width:38px;height:60px;overflow:hidden">
<div class="t" style="left:19.00px;top:9.46px;width:1000px;font-size:16px;line-height:16px;color:#000;text-align:left;">232</div>
<div class="t" style="left:28.00px;top:40.46px;width:1000px;font-size:16px;line-height:16px;color:#000;text-align:left;">6</div>
</div>
<div style="left:1460px;top:207px;width:102px;height:37px;background:#f0f0f0;border-top:1px solid #fdfdfd;border-left:1px solid #fdfdfd;border-right:2px solid #a0a0a0;border-bottom:2px solid #a0a0a0;box-shadow:inset -1px -1px 0 #d0d0d0"></div>
<div class="t" style="left:1011.00px;top:217.76px;width:1000px;font-size:16px;line-height:16px;color:#1a1a1a;text-align:center;">FIX</div>
<div style="left:1458px;top:257px;width:101px;height:37px;background:#f0f0f0;border-top:1px solid #fdfdfd;border-left:1px solid #fdfdfd;border-right:2px solid #a0a0a0;border-bottom:2px solid #a0a0a0;box-shadow:inset -1px -1px 0 #d0d0d0"></div>
<div class="t" style="left:1008.50px;top:268.26px;width:1000px;font-size:16px;line-height:16px;color:#1a1a1a;text-align:center;letter-spacing:0.6px;">Тохиргоо</div>
<div style="left:1458px;top:294px;width:101px;height:35px;background:#f0f0f0;border-top:1px solid #fdfdfd;border-left:1px solid #fdfdfd;border-right:2px solid #a0a0a0;border-bottom:2px solid #a0a0a0;box-shadow:inset -1px -1px 0 #d0d0d0"></div>
<div class="t" style="left:1008.50px;top:303.26px;width:1000px;font-size:16px;line-height:16px;color:#1a1a1a;text-align:center;letter-spacing:0.2px;">Paste</div>
<div style="left:1467px;top:826px;width:103px;height:35px;background:#f0f0f0;border-top:1px solid #fdfdfd;border-left:1px solid #fdfdfd;border-right:2px solid #a0a0a0;border-bottom:2px solid #a0a0a0;box-shadow:inset -1px -1px 0 #d0d0d0"></div>
<div class="t" style="left:1018.50px;top:834.96px;width:1000px;font-size:16px;line-height:16px;color:#1a1a1a;text-align:center;letter-spacing:0.2px;">Paste</div>
<div style="left:0px;top:1054px;width:1920px;height:26px;background:#e8e8e9;border-top:1px solid #a4a4a4"></div>
<div style="left:37px;top:1058px;width:1px;height:22px;background:#b4b4b4"></div>
<div style="left:333px;top:1058px;width:1px;height:22px;background:#b4b4b4"></div>
<div style="left:416px;top:1058px;width:1px;height:22px;background:#b4b4b4"></div>
<div style="left:510px;top:1058px;width:1px;height:22px;background:#b4b4b4"></div>
<div style="left:560px;top:1058px;width:1px;height:22px;background:#b4b4b4"></div>
<div style="left:627px;top:1058px;width:1px;height:22px;background:#b4b4b4"></div>
<div style="left:37px;top:1054px;width:99px;height:26px;border:1px solid #c6c6c6;border-bottom:none;background:#e8e8e9"></div>
<div style="left:135px;top:1053px;width:78px;height:27px;background:#fff"></div>
<div style="left:212px;top:1054px;width:1px;height:26px;background:#c6c6c6"></div>
<div style="left:135px;top:1054px;width:1px;height:26px;background:#c6c6c6"></div>
<div class="t" style="left:52.00px;top:1057.76px;width:1000px;font-size:18px;line-height:18px;color:#444;text-align:left;transform:scaleX(1.1);transform-origin:left center;">togtmol</div>
<div class="t" style="left:148.00px;top:1057.76px;width:1000px;font-size:18px;line-height:18px;color:#217346;text-align:left;font-weight:700;">jurnal</div>
<div class="t" style="left:227.00px;top:1057.76px;width:1000px;font-size:18px;line-height:18px;color:#444;text-align:left;transform:scaleX(1.02);transform-origin:left center;">aj_husnegt</div>
<div class="t" style="left:348.00px;top:1057.76px;width:1000px;font-size:18px;line-height:18px;color:#444;text-align:left;transform:scaleX(1.02);transform-origin:left center;">devter</div>
<div class="t" style="left:431.00px;top:1057.76px;width:1000px;font-size:18px;line-height:18px;color:#444;text-align:left;transform:scaleX(1.08);transform-origin:left center;">tootsoo</div>
<div class="t" style="left:523.00px;top:1057.76px;width:1000px;font-size:18px;line-height:18px;color:#444;text-align:left;">CT</div>
<div class="t" style="left:574.00px;top:1057.76px;width:1000px;font-size:18px;line-height:18px;color:#444;text-align:left;">Help</div>
<svg style="position:absolute;left:663px;top:1058px" width="24" height="24"><g fill="none" stroke="#c4c4c4" stroke-width="1.3"><circle cx="12" cy="12" r="10.5"/><path d="M12 6 V18 M6 12 H18"/></g></svg>
<div style="left:1644px;top:1063px;width:3px;height:3px;background:#a6a6a6"></div>
<div style="left:1644px;top:1068px;width:3px;height:3px;background:#a6a6a6"></div>
<div style="left:1644px;top:1073px;width:3px;height:3px;background:#a6a6a6"></div>
<div style="left:1663px;top:1060px;width:22px;height:20px;background:#fff;border:1px solid #c6c6c6"></div>
<svg style="position:absolute;left:1669px;top:1064px" width="10" height="12"><polygon points="7,0 7,11 1,5.5" fill="#555"/></svg>
<div style="left:1685px;top:1060px;width:43px;height:20px;background:#fff;border:1px solid #c6c6c6"></div>
<div style="left:1728px;top:1060px;width:192px;height:20px;background:#d8d8d8"></div>
<div style="left:890px;top:851px;width:106px;height:106px;border-radius:50%;background:rgba(248,245,20,0.85);filter:blur(0.7px)"></div>
<svg style="position:absolute;left:942px;top:903px" width="16" height="24"><path d="M1.5 1.5 L1.5 19 L5.5 15 L8.5 22 L11 21 L8 14 L13.5 14 Z" fill="#fff" stroke="#111" stroke-width="1.2" stroke-linejoin="round"/></svg>
</body></html>
